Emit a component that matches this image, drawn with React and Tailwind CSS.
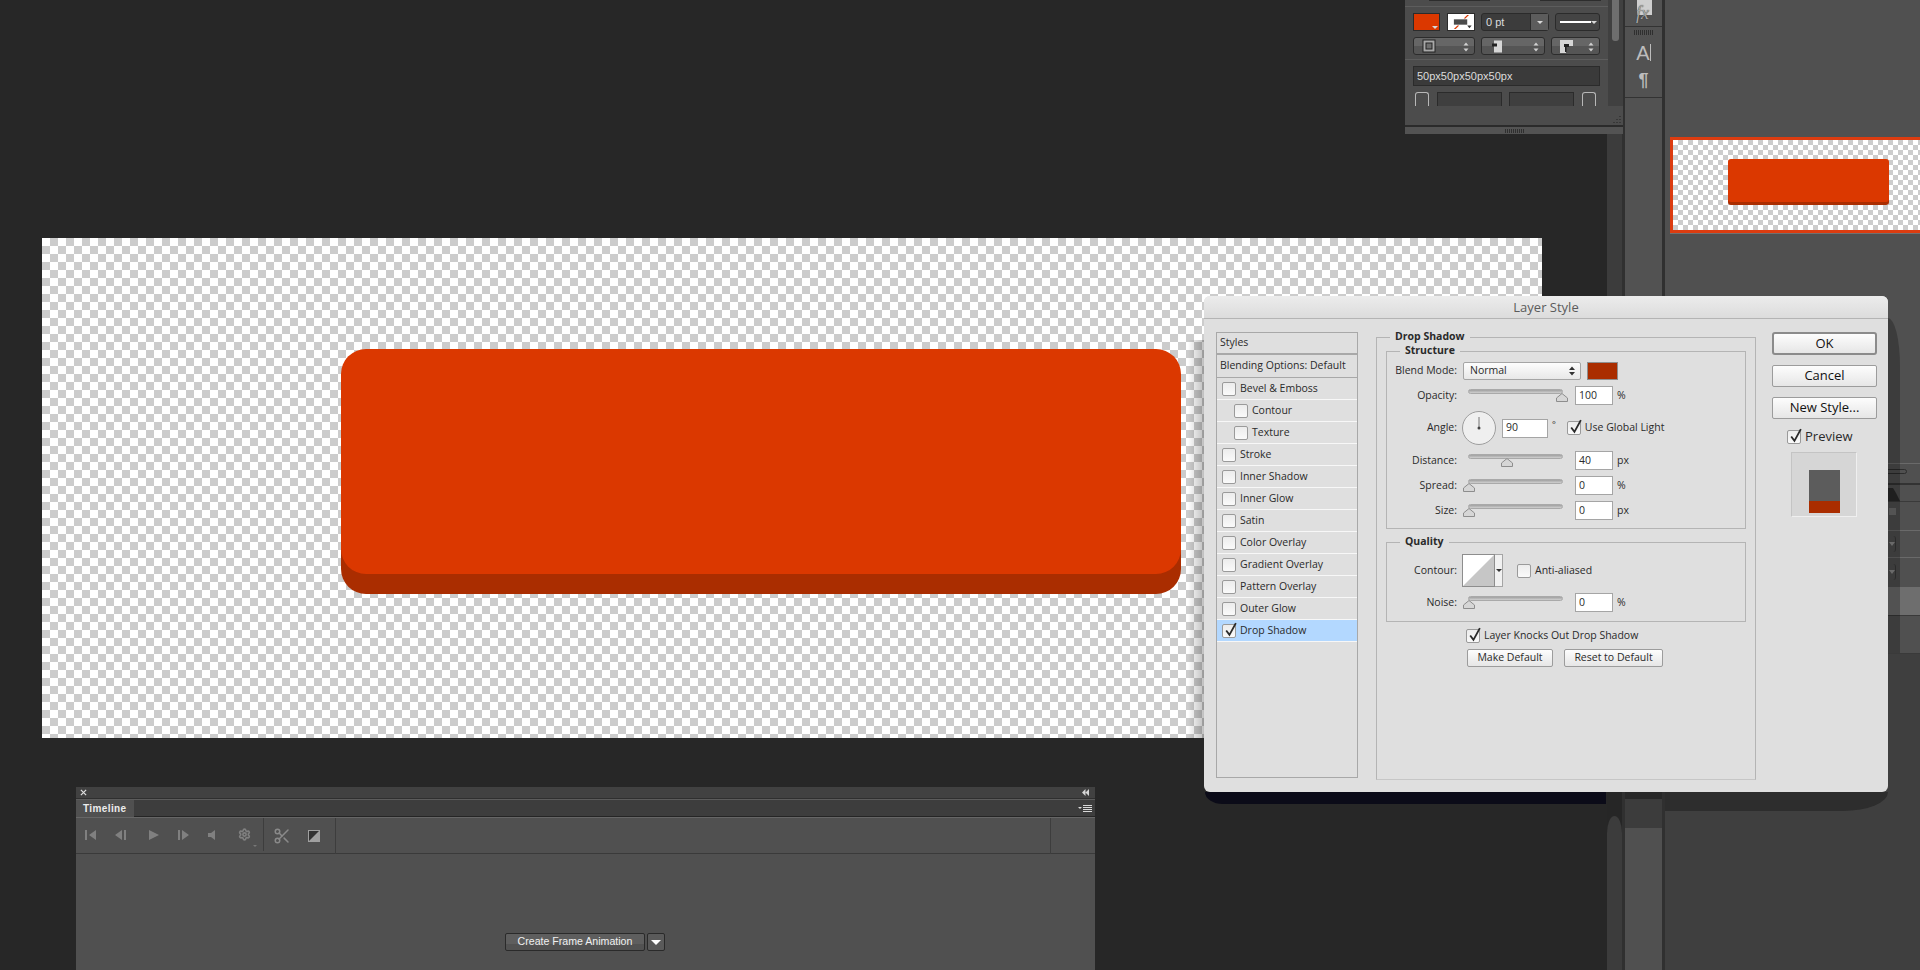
import { Scissors, Settings } from 'lucide-react';

const checker = 'bg-[conic-gradient(#cccccc_25%,#ffffff_0_50%,#cccccc_0_75%,#ffffff_0)]';

const effects = [
  { label: 'Bevel & Emboss' },
  { label: 'Contour', indent: true },
  { label: 'Texture', indent: true },
  { label: 'Stroke' },
  { label: 'Inner Shadow' },
  { label: 'Inner Glow' },
  { label: 'Satin' },
  { label: 'Color Overlay' },
  { label: 'Gradient Overlay' },
  { label: 'Pattern Overlay' },
  { label: 'Outer Glow' },
  { label: 'Drop Shadow', checked: true, active: true },
];

function Check({ checked }) {
  return (
    <span className="relative block w-[14px] h-[14px] shrink-0 rounded-[2px] border border-[#9a9a9a] bg-gradient-to-b from-[#ececec] to-[#fafafa]">
      {checked && (
        <svg viewBox="0 0 14 14" className="absolute -top-[3px] left-0 w-[15px] h-[15px]">
          <path d="M3 8 L6 12 L12 1" fill="none" stroke="#2a2a2a" strokeWidth="1.7" />
        </svg>
      )}
    </span>
  );
}

function Label({ children }) {
  return <span className="w-[70px] shrink-0 text-right">{children}:</span>;
}

function Field({ value, className }) {
  return (
    <span className={`flex items-center h-[19px] pl-[3px] shrink-0 border border-[#a5a5a5] bg-white ${className}`}>
      {value}
    </span>
  );
}

function Slider({ pos, ml = 'ml-[11px]' }) {
  return (
    <span className={`relative block w-[95px] h-[5px] -mt-[8px] shrink-0 rounded-full border border-[#a9a9a9] bg-gradient-to-b from-[#a0a0a0] to-[#d0d0d0] ${ml}`}>
      <svg viewBox="0 0 12 9" className="absolute top-[3px] w-[12px] h-[9px]" style={{ left: pos - 6 }}>
        <path d="M0.5 8.5 V5 L6 0.5 L11.5 5 V8.5 Z" fill="#d6d6d6" stroke="#8d8d8d" />
      </svg>
    </span>
  );
}

function SliderRow({ label, pos, value, unit }) {
  return (
    <div className="flex items-center h-[19px]">
      <Label>{label}</Label>
      <Slider pos={pos} />
      <Field value={value} className="w-[38px] ml-[12px]" />
      <span className="ml-[4px]">{unit}</span>
    </div>
  );
}

function Legend({ children, className }) {
  return (
    <span className={`absolute -top-[9px] px-[5px] bg-[#dfdfdf] font-bold leading-[14px] ${className}`}>
      {children}
    </span>
  );
}

function DialogButton({ children, strong }) {
  return (
    <div
      className={`flex items-center justify-center w-[105px] text-[13px] text-[#111] bg-gradient-to-b from-[#fdfdfd] to-[#e6e6e6] ${
        strong ? 'h-[23px] rounded-[3px] border-2 border-[#8b8b8b]' : 'h-[22px] rounded-[2px] border border-[#9c9c9c]'
      }`}
    >
      {children}
    </div>
  );
}

function SmallButton({ children, className }) {
  return (
    <div className={`flex items-center justify-center h-[18px] rounded-[2px] border border-[#9c9c9c] bg-gradient-to-b from-[#fdfdfd] to-[#e6e6e6] ${className}`}>
      {children}
    </div>
  );
}

function LayerStyleDialog() {
  return (
    <div className="absolute left-[1204px] top-[296px] w-[684px] h-[496px] z-20 flex flex-col rounded-[6px] bg-[#dfdfdf] font-['Open_Sans',sans-serif] text-[10.5px] text-[#2a2a2a]">
      <div className="flex items-center justify-center h-[23px] pt-[2px] shrink-0 rounded-t-[6px] border-b border-[#b4b4b4] bg-gradient-to-b from-[#ececec] to-[#dcdcdc] text-[13px] text-[#5b5b5b]">
        Layer Style
      </div>

      <div className="flex pl-[12px] pt-[13px]">
        {/* Effects list */}
        <div className="w-[142px] h-[446px] shrink-0 border border-[#a8a8a8]">
          <div className="flex items-center h-[22px] pl-[3px] border-b-2 border-[#a8a8a8]">Styles</div>
          <div className="flex items-center h-[23px] pl-[3px] border-b border-[#a8a8a8]">Blending Options: Default</div>
          {effects.map((e) => (
            <div
              key={e.label}
              className={`flex items-center gap-[4px] h-[22px] border-b border-[#f7f7f7] ${e.indent ? 'pl-[17px]' : 'pl-[5px]'} ${
                e.active ? 'bg-[#b3d8ff]' : ''
              }`}
            >
              <Check checked={e.checked} />
              {e.label}
            </div>
          ))}
        </div>

        {/* Drop shadow settings */}
        <div className="relative w-[380px] h-[443px] ml-[18px] mt-[5px] shrink-0 px-[9px] pt-[13px] border border-[#b4b4b4] border-b-[#c6c6c6]">
          <Legend className="left-[13px]">Drop Shadow</Legend>

          <div className="relative h-[178px] flex flex-col gap-[6px] pt-[10px] border border-[#b4b4b4]">
            <Legend className="left-[13px]">Structure</Legend>
            <div className="flex items-center h-[18px]">
              <Label>Blend Mode</Label>
              <span className="relative flex items-center w-[118px] h-[18px] ml-[6px] pl-[6px] rounded-[2px] border border-[#a5a5a5] bg-gradient-to-b from-[#fdfdfd] to-[#e8e8e8]">
                Normal
                <svg viewBox="0 0 8 12" className="absolute right-[4px] top-[2px] w-[8px] h-[12px]">
                  <path d="M1 5 L4 1.5 L7 5 Z M1 7 L4 10.5 L7 7 Z" fill="#333" />
                </svg>
              </span>
              <span className="block w-[31px] h-[18px] ml-[6px] border border-[#8f8f8f] bg-[#aa2d00]" />
            </div>
            <SliderRow label="Opacity" pos={93} value="100" unit="%" />
            <div className="flex items-center h-[34px]">
              <Label>Angle</Label>
              <svg viewBox="0 0 34 34" className="w-[34px] h-[34px] ml-[5px] shrink-0">
                <circle cx="17" cy="17" r="16.5" fill="#efefef" stroke="#9d9d9d" />
                <path d="M17 17 V6" stroke="#555" strokeWidth="0.8" />
                <circle cx="17" cy="17" r="1.5" fill="#444" />
              </svg>
              <Field value="90" className="w-[46px] ml-[6px]" />
              <span className="ml-[4px] mr-[11px] text-[9px] -mt-[6px]">°</span>
              <Check checked />
              <span className="ml-[4px]">Use Global Light</span>
            </div>
            <SliderRow label="Distance" pos={38} value="40" unit="px" />
            <SliderRow label="Spread" pos={0} value="0" unit="%" />
            <SliderRow label="Size" pos={0} value="0" unit="px" />
          </div>

          <div className="relative h-[80px] mt-[13px] flex flex-col gap-[6px] pt-[11px] border border-[#b4b4b4]">
            <Legend className="left-[13px]">Quality</Legend>
            <div className="flex items-center h-[33px]">
              <Label>Contour</Label>
              <svg viewBox="0 0 33 33" className="w-[33px] h-[33px] ml-[5px] shrink-0">
                <rect x="0.5" y="0.5" width="32" height="32" fill="#ffffff" stroke="#8d8d8d" />
                <path d="M1 32 L32 1 V32 Z" fill="#c6c6c6" />
              </svg>
              <span className="relative block w-[8px] h-[33px] border border-l-0 border-[#a5a5a5] bg-[#f1f1f1]">
                <span className="absolute top-[14px] left-[1px] border-x-[3px] border-t-[3px] border-x-transparent border-t-[#333]" />
              </span>
              <span className="ml-[14px]"><Check /></span>
              <span className="ml-[4px]">Anti-aliased</span>
            </div>
            <SliderRow label="Noise" pos={0} value="0" unit="%" />
          </div>

          <div className="flex items-center gap-[4px] mt-[7px] ml-[80px] h-[14px]">
            <Check checked />
            Layer Knocks Out Drop Shadow
          </div>
          <div className="flex gap-[11px] mt-[6px] ml-[81px]">
            <SmallButton className="w-[86px]">Make Default</SmallButton>
            <SmallButton className="w-[99px]">Reset to Default</SmallButton>
          </div>
        </div>

        {/* Buttons and preview */}
        <div className="w-[105px] ml-[16px] shrink-0 flex flex-col">
          <DialogButton strong>OK</DialogButton>
          <div className="mt-[10px]"><DialogButton>Cancel</DialogButton></div>
          <div className="mt-[10px]"><DialogButton>New Style...</DialogButton></div>
          <div className="flex items-center gap-[4px] mt-[11px] ml-[15px] h-[14px] text-[13px]">
            <Check checked />
            Preview
          </div>
          <div className="flex justify-center w-[66px] h-[65px] mt-[8px] ml-[19px] pt-[17px] border border-[#c4c4c4] border-b-[#efefef] border-r-[#efefef] bg-[#d6d6d6]">
            <div className="w-[31px] h-[43px] flex flex-col justify-end bg-[#5c5c5c]">
              <div className="h-[12px] bg-[#aa2d00]" />
            </div>
          </div>
        </div>
      </div>
    </div>
  );
}

function SpinButton({ className, children }) {
  return (
    <div className={`relative flex items-center h-[18px] pl-[7px] rounded-[3px] border border-[#2c2c2c] bg-gradient-to-b from-[#666] from-50% to-[#555] to-50% ${className}`}>
      {children}
      <svg viewBox="0 0 6 12" className="absolute right-[5px] top-[3px] w-[6px] h-[12px]">
        <path d="M0.5 4.5 L3 1.5 L5.5 4.5 Z M0.5 7.5 L3 10.5 L5.5 7.5 Z" fill="#d0d0d0" />
      </svg>
    </div>
  );
}

function Caret({ className }) {
  return <span className={`absolute border-x-[3px] border-t-[3px] border-x-transparent border-t-[#d8d8d8] ${className}`} />;
}

function PropertiesPanel() {
  return (
    <div className="absolute left-[1405px] top-0 w-[218px] h-[134px] z-10 flex flex-col bg-[#4c4c4c] font-['Liberation_Sans',sans-serif] text-[11px] text-[#dcdcdc]">
      <div className="flex h-[106px] shrink-0 overflow-hidden">
        <div className="w-[203px] shrink-0 flex flex-col">
          <div className="flex h-[7px] border-b border-[#5d5d5d]">
            <span className="block w-[61px] h-[1px] ml-[24px] bg-[#2d2d2d]" />
            <span className="block w-[61px] h-[1px] ml-[50px] bg-[#2d2d2d]" />
          </div>
          <div className="flex items-center h-[18px] mt-[6px] pl-[8px]">
            <div className="relative w-[27px] h-[18px] border border-[#2b2b2b] bg-[#db3800]">
              <Caret className="right-[1px] bottom-[1px]" />
            </div>
            <div className="relative w-[28px] h-[18px] ml-[7px] border border-[#2b2b2b] bg-white">
              <svg viewBox="0 0 28 18" className="w-full h-full">
                <rect x="6" y="6" width="15" height="6" fill="#4a4a4a" />
                <path d="M17 5 L21 1 H23 L19 5 Z M6 17 L10 13 H12 L8 17 Z" fill="#db3800" />
                <path d="M21 13 H26 L23.5 16 Z" fill="#333" />
              </svg>
            </div>
            <div className="relative flex items-center w-[68px] h-[18px] ml-[6px] pl-[4px] rounded-[3px] border border-[#2b2b2b] bg-[#3c3c3c]">
              0 pt
              <span className="absolute right-0 top-0 flex items-center justify-center w-[18px] h-full border-l border-[#2b2b2b] bg-[#5c5c5c]">
                <span className="border-x-[3px] border-t-[3px] border-x-transparent border-t-[#d8d8d8]" />
              </span>
            </div>
            <div className="relative flex items-center w-[45px] h-[18px] ml-[6px] pl-[4px] rounded-[3px] border border-[#2b2b2b] bg-[#444]">
              <span className="block w-[31px] h-[2px] bg-white" />
              <Caret className="right-[2px] top-[7px]" />
            </div>
          </div>
          <div className="flex items-center gap-[6px] h-[18px] mt-[6px] pl-[8px]">
            <SpinButton className="w-[62px] pl-[8px]">
              <svg viewBox="0 0 14 14" className="w-[14px] h-[14px]">
                <rect x="1" y="1" width="12" height="12" fill="#a8a8a8" stroke="#222" />
                <rect x="4" y="4" width="6" height="6" fill="#6f6f6f" stroke="#222" />
              </svg>
            </SpinButton>
            <SpinButton className="w-[64px] pl-[10px]">
              <svg viewBox="0 0 10 12" className="w-[10px] h-[13px]">
                <rect x="2" y="0" width="8" height="12" fill="#d6d6d6" />
                <rect x="0" y="3" width="5" height="3" fill="#222" />
              </svg>
            </SpinButton>
            <SpinButton className="w-[49px] pl-[8px]">
              <svg viewBox="0 0 13 13" className="w-[13px] h-[13px]">
                <path d="M0 0 H13 V6 H6 V13 H0 Z" fill="#d6d6d6" />
                <rect x="4" y="4" width="5" height="3" fill="#222" />
                <rect x="5" y="6" width="1.5" height="6" fill="#222" />
              </svg>
            </SpinButton>
          </div>
          <div className="h-[1px] mt-[4px] bg-[#5d5d5d]" />
          <div className="flex items-center h-[20px] mt-[6px] mx-[8px] pl-[3px] w-[187px] border border-[#2b2b2b] bg-[#3a3a3a]">
            50px50px50px50px
          </div>
          <div className="flex items-start gap-[8px] mt-[6px] ml-[10px]">
            <span className="block w-[14px] h-[14px] rounded-t-[3px] border border-b-0 border-[#b8b8b8]" />
            <span className="block w-[65px] h-[14px] border border-b-0 border-[#2b2b2b] bg-[#3f3f3f]" />
            <span className="block w-[65px] h-[14px] border border-b-0 border-[#2b2b2b] bg-[#3f3f3f] -ml-[1px]" />
            <span className="block w-[14px] h-[14px] rounded-t-[3px] border border-b-0 border-[#b8b8b8]" />
          </div>
        </div>
        <div className="flex-1 bg-[#404040] pl-[4px]">
          <div className="w-[7px] h-[41px] rounded-b-[3px] bg-[#6e6e6e]" />
        </div>
      </div>
      <div className="relative h-[19px] shrink-0">
        <svg viewBox="0 0 9 9" className="absolute right-[2px] bottom-[1px] w-[9px] h-[9px]">
          <path d="M8 1 V2 M5 4 V5 M8 4 V5 M2 7 V8 M5 7 V8 M8 7 V8" stroke="#222" />
        </svg>
      </div>
      <div className="flex flex-1 items-center justify-center border-t-2 border-[#2b2b2b] bg-[#535353]">
        <span className="block w-[19px] h-[4px] bg-[repeating-linear-gradient(90deg,#2f2f2f_0_1px,transparent_1px_2px)]" />
      </div>
    </div>
  );
}

function Transport({ d, className }) {
  return (
    <svg viewBox="0 0 12 10" className={`w-[12px] h-[10px] shrink-0 ${className}`}>
      <path d={d} fill="#808080" />
    </svg>
  );
}

function TimelinePanel() {
  return (
    <div className="absolute left-[76px] top-[787px] w-[1019px] h-[183px] z-10 flex flex-col rounded-t-[2px] bg-[#505050] font-['Liberation_Sans',sans-serif]">
      <div className="relative flex items-center justify-between h-[12px] shrink-0 px-[4px] bg-[#414141] border-b border-[#2f2f2f]">
        <svg viewBox="0 0 8 8" className="w-[7px] h-[7px]">
          <path d="M1 1 L7 7 M7 1 L1 7" stroke="#e0e0e0" strokeWidth="1.4" />
        </svg>
        <svg viewBox="0 0 8 8" className="w-[7px] h-[7px] mr-[2px]">
          <path d="M4 0 V8 L0 4 Z M8 0 V8 L4 4 Z" fill="#d6d6d6" />
        </svg>
      </div>
      <div className="flex h-[18px] shrink-0 border-t border-[#5c5c5c] border-b border-b-[#252525] bg-[#3d3d3d]">
        <div className="flex items-center w-[58px] h-[17px] pl-[7px] bg-[#505050] text-[10px] font-bold tracking-[0.4px] text-[#ececec]">
          Timeline
        </div>
        <div className="flex flex-1 items-center justify-end pr-[3px] gap-[1px]">
          <span className="border-x-[2px] border-t-[2px] border-x-transparent border-t-[#d8d8d8]" />
          <span className="flex flex-col gap-[1px] w-[9px]">
            <span className="h-[1px] bg-[#d8d8d8]" />
            <span className="h-[1px] bg-[#d8d8d8]" />
            <span className="h-[1px] bg-[#d8d8d8]" />
            <span className="h-[1px] bg-[#d8d8d8]" />
          </span>
        </div>
      </div>
      <div className="flex h-[37px] shrink-0 border-t border-[#666] border-b border-b-[#3a3a3a]">
        <div className="relative flex items-center w-[188px] h-[33px] pl-[9px] border-r border-[#3d3d3d]">
          <Transport d="M0 0 H2 V10 H0 Z M11 0 V10 L4 5 Z" />
          <Transport className="ml-[18px]" d="M7 0 V10 L0 5 Z M9 0 H11 V10 H9 Z" />
          <Transport className="ml-[21px]" d="M1 0 L11 5 L1 10 Z" />
          <Transport className="ml-[18px]" d="M0 0 H2 V10 H0 Z M4 0 L11 5 L4 10 Z" />
          <Transport className="ml-[18px]" d="M0 3 H3 L7 0 V10 L3 7 H0 Z" />
          <Settings size={13} strokeWidth={3} className="ml-[18px] shrink-0 text-[#808080]" />
          <span className="absolute left-[177px] top-[27px] border-x-[2px] border-t-[2px] border-x-transparent border-t-[#777]" />
        </div>
        <div className="flex items-center w-[72px] h-[36px] border-r border-[#3d3d3d]">
          <Scissors size={18} className="ml-[9px] shrink-0 text-[#8a8a8a]" />
          <svg viewBox="0 0 12 12" className="w-[12px] h-[12px] ml-[17px] shrink-0">
            <rect width="12" height="12" fill="#a0a0a0" />
            <path d="M1 11 L11 1 H1 Z" fill="#333" />
          </svg>
        </div>
        <div className="w-[715px] h-[36px] border-r border-[#3d3d3d]" />
      </div>
      <div className="flex items-start gap-[2px] mt-[79px] ml-[429px]">
        <div className="flex items-center justify-center w-[140px] h-[18px] rounded-[2px] border border-[#2a2a2a] bg-gradient-to-b from-[#5e5e5e] from-60% to-[#525252] to-60% text-[10.6px] text-[#f0f0f0]">
          Create Frame Animation
        </div>
        <div className="flex items-center justify-center w-[18px] h-[18px] rounded-[2px] border border-[#2a2a2a] bg-[#5a5a5a]">
          <span className="border-x-[5px] border-t-[5px] border-x-transparent border-t-white" />
        </div>
      </div>
    </div>
  );
}

function DocumentCanvas() {
  return (
    <div className={`absolute left-[42px] top-[238px] w-[1500px] h-[500px] pl-[299px] pt-[111px] ${checker} bg-[length:16px_16px]`}>
      <div className="w-[840px] h-[225px] rounded-[25px] bg-[#db3800] shadow-[0_20px_0_#aa2d00]" />
    </div>
  );
}

function Dock() {
  return (
    <div className="w-[43px] shrink-0 flex flex-col border-x-[3px] border-[#303030] font-['Liberation_Sans',sans-serif]">
      <div className="h-[792px] shrink-0 flex flex-col bg-[#525252]">
        <div className="relative h-[27px] border-b border-[#333]">
          <span className="absolute left-[12px] top-0 block w-[15px] h-[15px] bg-[#cfcfcf]" />
          <span className="absolute left-[11px] top-[6px] font-['Liberation_Serif',serif] italic text-[18px] leading-[15px] text-[#a8a8a8] [text-shadow:0_0_1px_#222]">fx</span>
        </div>
        <span className="block w-[19px] h-[5px] mt-[3px] mx-auto bg-[repeating-linear-gradient(90deg,#2f2f2f_0_1px,transparent_1px_2px)]" />
        <div className="flex items-center justify-center h-[21px] mt-[7px] text-[20px] leading-none text-[#bdbdbd]">
          A<span className="block w-[1px] h-[17px] bg-[#bdbdbd]" />
        </div>
        <div className="flex items-center justify-center h-[18px] mt-[8px] text-[18px] leading-none font-bold text-[#bdbdbd]">¶</div>
        <div className="h-[9px] border-b border-[#333]" />
      </div>
      <div className="h-[7px] shrink-0 bg-[#282828]" />
      <div className="h-[29px] shrink-0 bg-[#3c3c3c]" />
      <div className="flex-1 bg-[#505050]" />
    </div>
  );
}

function RightPanel() {
  return (
    <div className="w-[255px] shrink-0 flex flex-col">
      <div className="h-[653px] shrink-0 pt-[137px] pl-[5px] bg-[#505050]">
        <div className={`w-[250px] h-[96px] pl-[55px] pt-[19px] border-[3px] border-r-0 border-[#dc3c10] shadow-[0_1px_0_#707070] ${checker} bg-[length:10px_10px]`}>
          <div className="w-[161px] h-[43px] rounded-[3px] bg-[#db3800] shadow-[0_3px_0_#aa2d00]" />
        </div>

        {/* Panel rows that stick out to the right of the dialog */}
        <div className="ml-[218px] mt-[230px]">
          <div className="h-[20px] pt-[5px] border-t border-[#6a6a6a]">
            <div className="w-[24px] h-[5px] ml-[-5px] rounded-r-full border border-[#2d2d2d]" />
          </div>
          <div className="h-[18px] border-t-2 border-[#333]">
            <svg viewBox="0 0 32 16" className="w-[32px] h-[16px]">
              <path d="M0 3 H5 L8 8 L12 16 H0 Z" fill="#2a2a2a" />
            </svg>
          </div>
          <div className="h-[29px] pt-[6px] border-t border-[#3a3a3a]">
            <span className="block w-[7px] h-[7px] ml-[1px] bg-[#6f6f6f]" />
          </div>
          <div className="h-[27px] pt-[5px] border-t border-[#6a6a6a]">
            <div className="flex items-center justify-center w-[8px] h-[16px] rounded-r-[3px] border-r border-[#3a3a3a]">
              <span className="border-x-[3px] border-t-[4px] border-x-transparent border-t-[#8e8e8e]" />
            </div>
          </div>
          <div className="h-[30px] pt-[6px] border-t border-[#6a6a6a]">
            <div className="flex items-center justify-center w-[8px] h-[16px] rounded-r-[3px] border-r border-[#3a3a3a]">
              <span className="border-x-[3px] border-t-[4px] border-x-transparent border-t-[#8e8e8e]" />
            </div>
          </div>
          <div className="h-[29px] bg-[#6e6e6e] border-b border-[#3a3a3a]" />
        </div>
      </div>
      <div className="flex-1 border-t border-[#3a3a3a] bg-[#3f3f3f]" />
    </div>
  );
}

export default function App() {
  return (
    <div className="relative flex w-[1920px] h-[970px] overflow-hidden bg-[#272727]">
      <div className="flex-1" />

      {/* column behind the panels */}
      <div className="w-[15px] shrink-0 flex flex-col">
        <div className="h-[792px] shrink-0 bg-[#3c3c3c]" />
        <div className="flex-1 pt-[24px] bg-[#262626]">
          <div className="h-full rounded-t-[8px_18px] bg-[#3c3c3c]" />
        </div>
      </div>

      <Dock />
      <RightPanel />

      <DocumentCanvas />
      <PropertiesPanel />
      <TimelinePanel />

      {/* dialog shadow pieces */}
      <div className="absolute left-[1188px] top-[340px] w-[16px] h-[398px] z-10 bg-gradient-to-r from-black/0 to-black/25" />
      <div className="absolute left-[1205px] top-[792px] w-[401px] h-[12px] z-10 rounded-bl-[18px_12px] bg-[#0b0b18]" />
      <div className="absolute left-[1665px] top-[792px] w-[223px] h-[19px] z-10 rounded-br-[45px_19px] bg-[#2d2d2d]" />
      <div className="absolute left-[1888px] top-[318px] w-[12px] h-[335px] z-10 rounded-tr-[12px_48px] bg-black/25" />

      <LayerStyleDialog />
    </div>
  );
}
